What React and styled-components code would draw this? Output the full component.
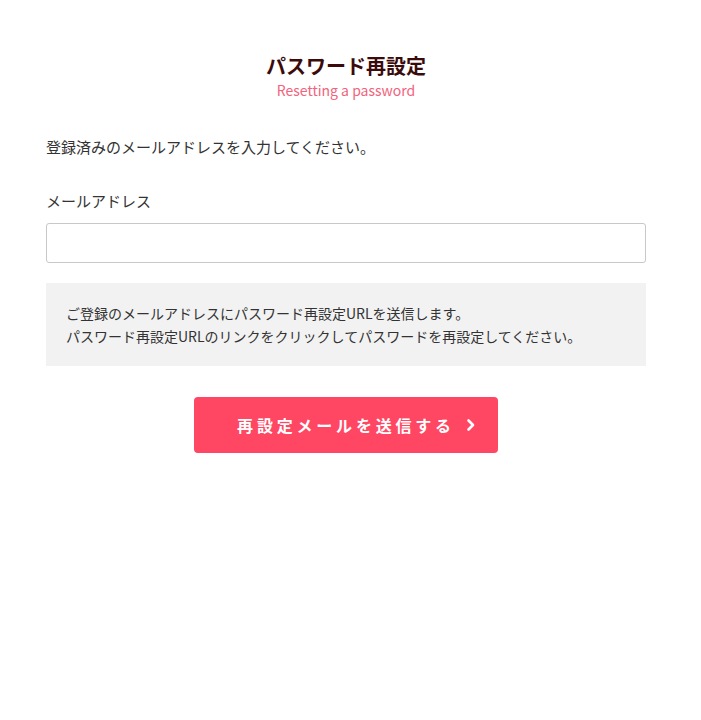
import React from "react";
import styled, { createGlobalStyle } from "styled-components";

const Global = createGlobalStyle`
  html, body { margin: 0; padding: 0; background: #fff; }
  body { font-family: "Noto Sans CJK JP", "Noto Sans", sans-serif; color: #333; }
`;

const Page = styled.main`
  width: 600px;
  margin-left: 46px;
  padding-top: 50px;
  display: flex;
  flex-direction: column;
`;

const Header = styled.header`
  display: flex;
  flex-direction: column;
  align-items: center;
`;

const Title = styled.h1`
  margin: 0;
  font-size: 20px;
  line-height: 32px;
  font-weight: 700;
  color: #3b0b0b;
`;

const Subtitle = styled.p`
  margin: 0;
  font-size: 14px;
  line-height: 16px;
  color: #f2637c;
`;

const Lead = styled.p`
  margin: 37px 0 0;
  font-size: 15px;
  line-height: 24px;
  color: #333;
`;

const Label = styled.label`
  margin-top: 30px;
  font-size: 15px;
  line-height: 24px;
  color: #333;
`;

const Input = styled.input`
  margin-top: 10px;
  box-sizing: border-box;
  width: 600px;
  height: 40px;
  border: 1px solid #c8c8c8;
  border-radius: 3px;
  padding: 0 10px;
  font-size: 15px;
  outline: none;
`;

const Notice = styled.div`
  margin-top: 20px;
  background: #f2f2f2;
  padding: 19px 20px 18px;
  min-height: 83px;
  box-sizing: border-box;
  font-size: 14px;
  line-height: 23px;
  color: #333;
  p { margin: 0; }
`;

const ButtonRow = styled.div`
  margin-top: 31px;
  display: flex;
  justify-content: center;
`;

const Button = styled.button`
  width: 304px;
  height: 56px;
  border: none;
  border-radius: 4px;
  background: #ff4662;
  color: #fff;
  font-family: inherit;
  font-size: 16px;
  font-weight: 700;
  letter-spacing: 3.8px;
  display: flex;
  align-items: center;
  justify-content: center;
  gap: 10px;
  padding: 0 0 0 22px;
  cursor: pointer;
`;

export default function App() {
  return (
    <>
      <Global />
      <Page>
        <Header>
          <Title>パスワード再設定</Title>
          <Subtitle>Resetting a password</Subtitle>
        </Header>
        <Lead>登録済みのメールアドレスを入力してください。</Lead>
        <Label htmlFor="email">メールアドレス</Label>
        <Input id="email" type="email" />
        <Notice>
          <p>ご登録のメールアドレスにパスワード再設定URLを送信します。</p>
          <p>パスワード再設定URLのリンクをクリックしてパスワードを再設定してください。</p>
        </Notice>
        <ButtonRow>
          <Button>
            <span>再設定メールを送信する</span>
            <svg width="12" height="14" viewBox="0 0 12 14" fill="none">
              <path d="M3.5 2.5l4.5 4.5-4.5 4.5" stroke="#fff" strokeWidth="2.6" strokeLinecap="round" strokeLinejoin="round" />
            </svg>
          </Button>
        </ButtonRow>
      </Page>
    </>
  );
}
